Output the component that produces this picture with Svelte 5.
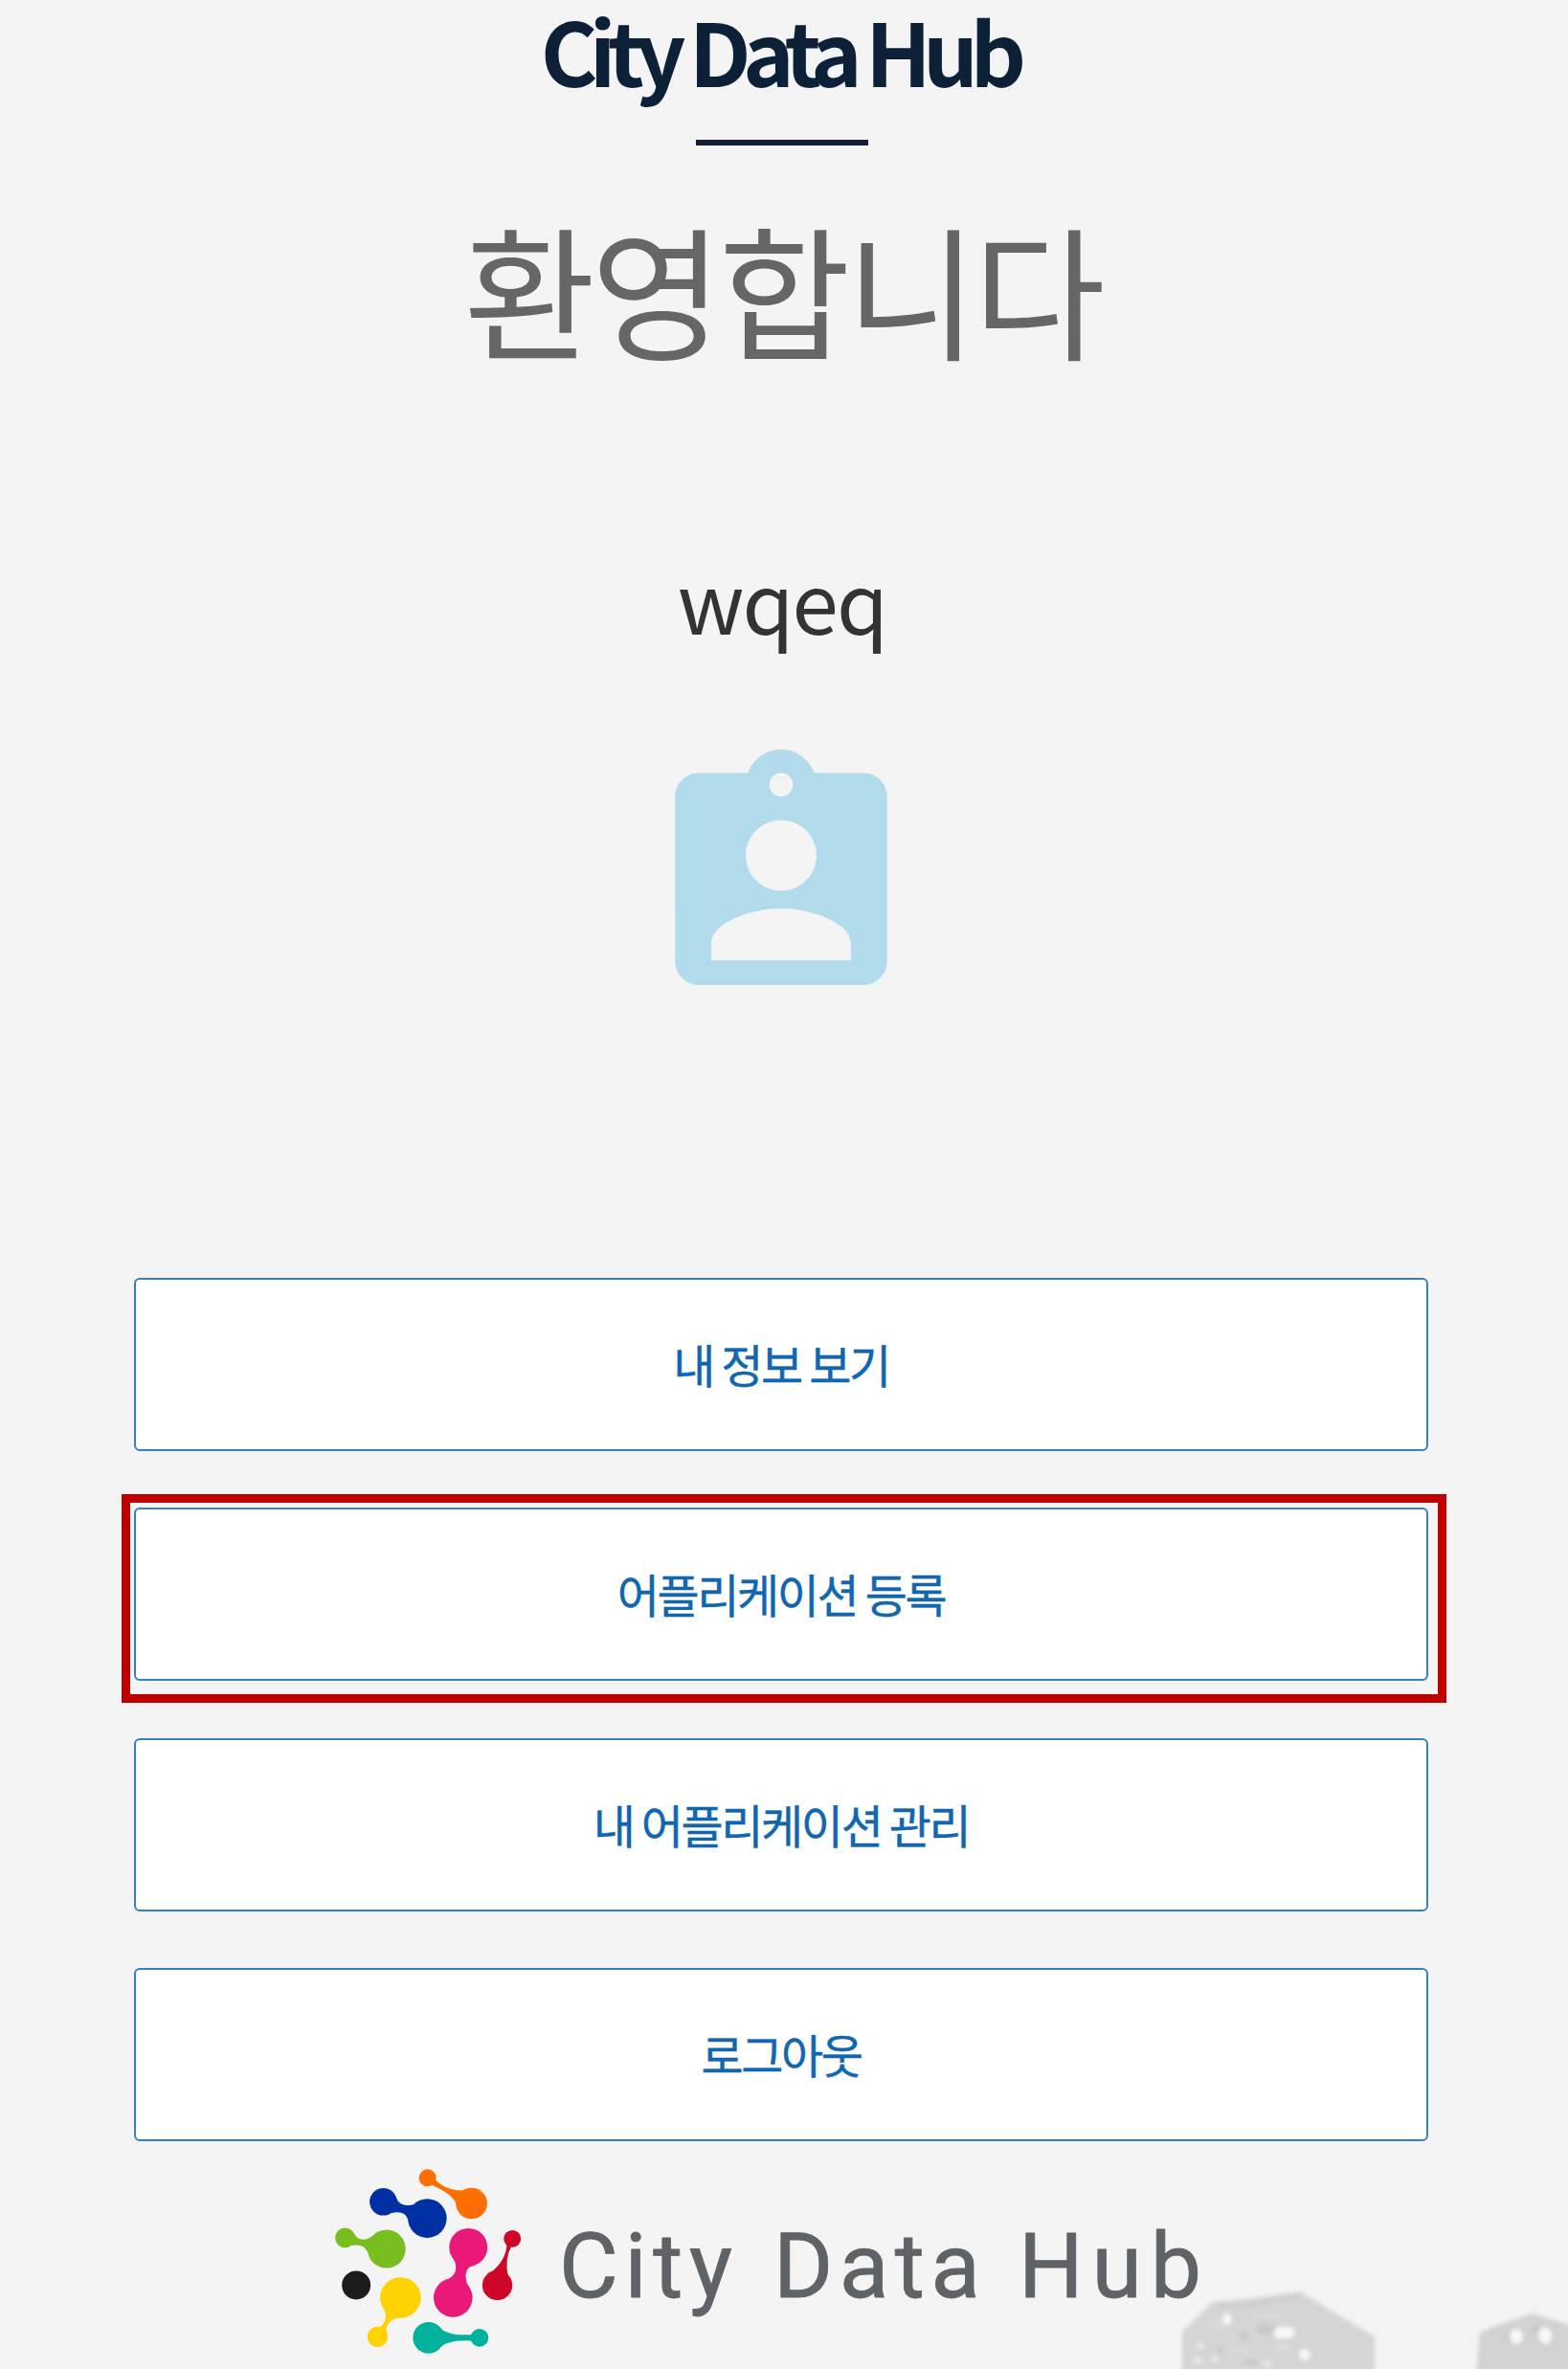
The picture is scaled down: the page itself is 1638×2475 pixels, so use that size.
<script lang="ts">
  const actions = [
    { label: '내 정보 보기', highlighted: false },
    { label: '어플리케이션 등록', highlighted: true },
    { label: '내 어플리케이션 관리', highlighted: false },
    { label: '로그아웃', highlighted: false },
  ];
</script>

<main class="page">
  <header class="header">
    <h1 class="title">City Data Hub</h1>
    <div class="rule"></div>
    <h2 class="welcome">환영합니다</h2>
  </header>

  <section class="profile">
    <p class="user">wqeq</p>
    <svg class="badge" viewBox="3 1 18 20" aria-hidden="true">
      <path d="M19 3h-4.18C14.4 1.84 13.3 1 12 1c-1.3 0-2.4.84-2.82 2H5c-1.1 0-2 .9-2 2v14c0 1.1.9 2 2 2h14c1.1 0 2-.9 2-2V5c0-1.1-.9-2-2-2zm-7 0c.55 0 1 .45 1 1s-.45 1-1 1-1-.45-1-1 .45-1 1-1zm0 4c1.66 0 3 1.34 3 3s-1.34 3-3 3-3-1.34-3-3 1.34-3 3-3zm5.93 11.9H6.07v-1.4c0-2 3.93-3 5.93-3s5.93 1 5.93 3V18.9z" />
    </svg>
  </section>

  <nav class="actions">
    {#each actions as action}
      <div class="item">
        <button class="action" type="button">{action.label}</button>
        {#if action.highlighted}<span class="ring"></span>{/if}
      </div>
    {/each}
  </nav>

  <footer class="footer">
    <svg class="mark" viewBox="30 108 585 580" aria-hidden="true">
      <g fill="#ff6f00">
        <circle cx="320" cy="136" r="27" /><circle cx="458" cy="216" r="49" />
        <path d="M345 143Q380 176 432 176L411 220Q402 188 334 159Z" />
      </g>
      <g fill="#0030a4">
        <circle cx="181" cy="211" r="43" /><circle cx="319" cy="263" r="61" />
        <path d="M220 195Q232 232 280 219L258 266Q248 236 205 247Z" />
      </g>
      <g fill="#78be1e">
        <circle cx="61" cy="324" r="31" /><circle cx="191" cy="359" r="60" />
        <path d="M87 308Q108 346 150 317L131 368Q120 340 78 349Z" />
      </g>
      <circle cx="96" cy="473" r="45" fill="#1c1c1c" />
      <g fill="#ffd203">
        <circle cx="235" cy="512" r="64" /><circle cx="163" cy="635" r="32" />
        <path d="M180 542Q201 580 170 604L190 624Q187 579 240 574Z" />
      </g>
      <g fill="#ea1878">
        <circle cx="448" cy="354" r="60" /><circle cx="400" cy="512" r="61" />
        <path d="M402 390Q425 440 372 460L449 482Q422 417 473 408Z" />
      </g>
      <g fill="#cf0529">
        <circle cx="586" cy="327" r="27" /><circle cx="539" cy="473" r="47" />
        <path d="M569 344Q566 395 522 430L573 448Q561 393 583 350Z" />
      </g>
      <g fill="#02b19c">
        <circle cx="323" cy="638" r="49" /><circle cx="483" cy="638" r="28" />
        <path d="M354 602Q382 634 464 628L464 648Q382 642 354 674Z" />
      </g>
    </svg>
    <svg class="wordmark" viewBox="588 2310 670 130" role="img" aria-label="City Data Hub">
      <text x="584" y="2400" textLength="181" lengthAdjust="spacing">City</text>
      <text x="808" y="2400" textLength="216" lengthAdjust="spacing">Data</text>
      <text x="1064" y="2400" textLength="191" lengthAdjust="spacing">Hub</text>
    </svg>
  </footer>

  <!-- faint rooftops rising from the bottom edge -->
  <svg class="rooftops" viewBox="0 0 438 135" aria-hidden="true">
    <g class="soft">
      <path fill="#d5d5d5" d="M35 150V96L66 65L110 61L158 54L194 76L236 101V150Z" />
      <path fill="#d2d2d2" d="M341 150L346 97L365 89L402 77L445 91V150Z" />
      <g fill="#c8c8c8">
        <ellipse cx="122" cy="93" rx="10" ry="6" /><circle cx="99" cy="100" r="5" />
        <circle cx="76" cy="116" r="4" /><ellipse cx="107" cy="128" rx="8" ry="3" />
        <circle cx="406" cy="94" r="5" /><circle cx="376" cy="101" r="5" />
      </g>
      <path fill="#cfcfcf" d="M70 67L155 58L157 62L110 70L72 72Z" />
      <g fill="#dadada">
        <ellipse cx="72" cy="90" rx="9" ry="6" /><ellipse cx="126" cy="80" rx="17" ry="3" />
        <ellipse cx="92" cy="116" rx="15" ry="3" /><ellipse cx="140" cy="112" rx="12" ry="4" />
      </g>
      <g fill="#f8f8f8">
        <ellipse cx="82" cy="83" rx="5" ry="6" /><rect x="131" y="91" width="21" height="12" rx="5" />
        <circle cx="163" cy="120" r="6" /><ellipse cx="384" cy="101" rx="7" ry="8" />
        <ellipse cx="414" cy="100" rx="7" ry="9" transform="rotate(-15 414 100)" />
      </g>
      <g fill="#e6e6e6">
        <circle cx="54" cy="111" r="4.5" /><circle cx="51" cy="126" r="5" />
        <circle cx="69" cy="124" r="4" /><circle cx="124" cy="130" r="4.5" />
      </g>
    </g>
  </svg>
</main>

<style>
  :global(body) {
    margin: 0;
    background: #f4f4f4;
  }
  .page {
    position: relative;
    box-sizing: border-box;
    width: 1638px;
    height: 2475px;
    overflow: hidden;
    background: #f4f4f4;
    font-family: 'Noto Sans CJK KR', 'Noto Sans', sans-serif;
  }
  .header {
    display: flex;
    flex-direction: column;
    align-items: center;
    height: 560px;
  }
  .title {
    margin: 0;
    height: 146px;
    padding-right: 10px;
    line-height: 102px;
    font-size: 91px;
    font-weight: 700;
    letter-spacing: -8.7px;
    color: #0c2038;
  }
  .rule {
    width: 180px;
    height: 6px;
    margin-right: 4px;
    background: #141f35;
  }
  .welcome {
    margin: 47px 0 0;
    padding-right: 4px;
    line-height: 201px;
    font-size: 150px;
    font-weight: 400;
    letter-spacing: -4.9px;
    color: #666;
  }
  .profile {
    display: flex;
    flex-direction: column;
    align-items: center;
    height: 775px;
  }
  .user {
    margin: 0;
    height: 223px;
    padding-right: 4px;
    line-height: 130px;
    font-size: 87px;
    letter-spacing: -1.8px;
    color: #333;
  }
  .badge {
    width: 222px;
    height: 246px;
    margin-right: 6px;
    fill: #b2dcec;
  }
  .actions {
    display: grid;
    gap: 59.4px;
    width: 1352px;
    margin-left: 140px;
  }
  .item {
    position: relative;
    height: 181px;
  }
  .action {
    display: block;
    box-sizing: border-box;
    width: 100%;
    height: 100%;
    padding: 0 0 3px;
    border: 2px solid #3780bc;
    border-radius: 6px;
    background: #fff;
    color: #1166b0;
    font: inherit;
    font-size: 48px;
    letter-spacing: -2.4px;
    -webkit-text-stroke: 0.4px #1166b0;
  }
  .ring {
    position: absolute;
    inset: -14px -19px -23px -13px;
    border: 9px solid #c00000;
    pointer-events: none;
  }
  .footer {
    display: flex;
    gap: 43px;
    margin: 29px 0 0 350px;
  }
  .mark {
    width: 195px;
    height: 193px;
  }
  .wordmark {
    width: 670px;
    height: 130px;
    margin-top: 44px;
    overflow: visible;
    font-family: Roboto, sans-serif;
    font-size: 95px;
    font-weight: 400;
    fill: #5f6266;
    stroke: #5f6266;
    stroke-width: 0.8px;
    stroke-linejoin: round;
  }
  .rooftops {
    position: absolute;
    right: 0;
    bottom: 0;
    width: 438px;
    height: 135px;
  }
  .soft {
    filter: blur(2px);
  }
</style>
